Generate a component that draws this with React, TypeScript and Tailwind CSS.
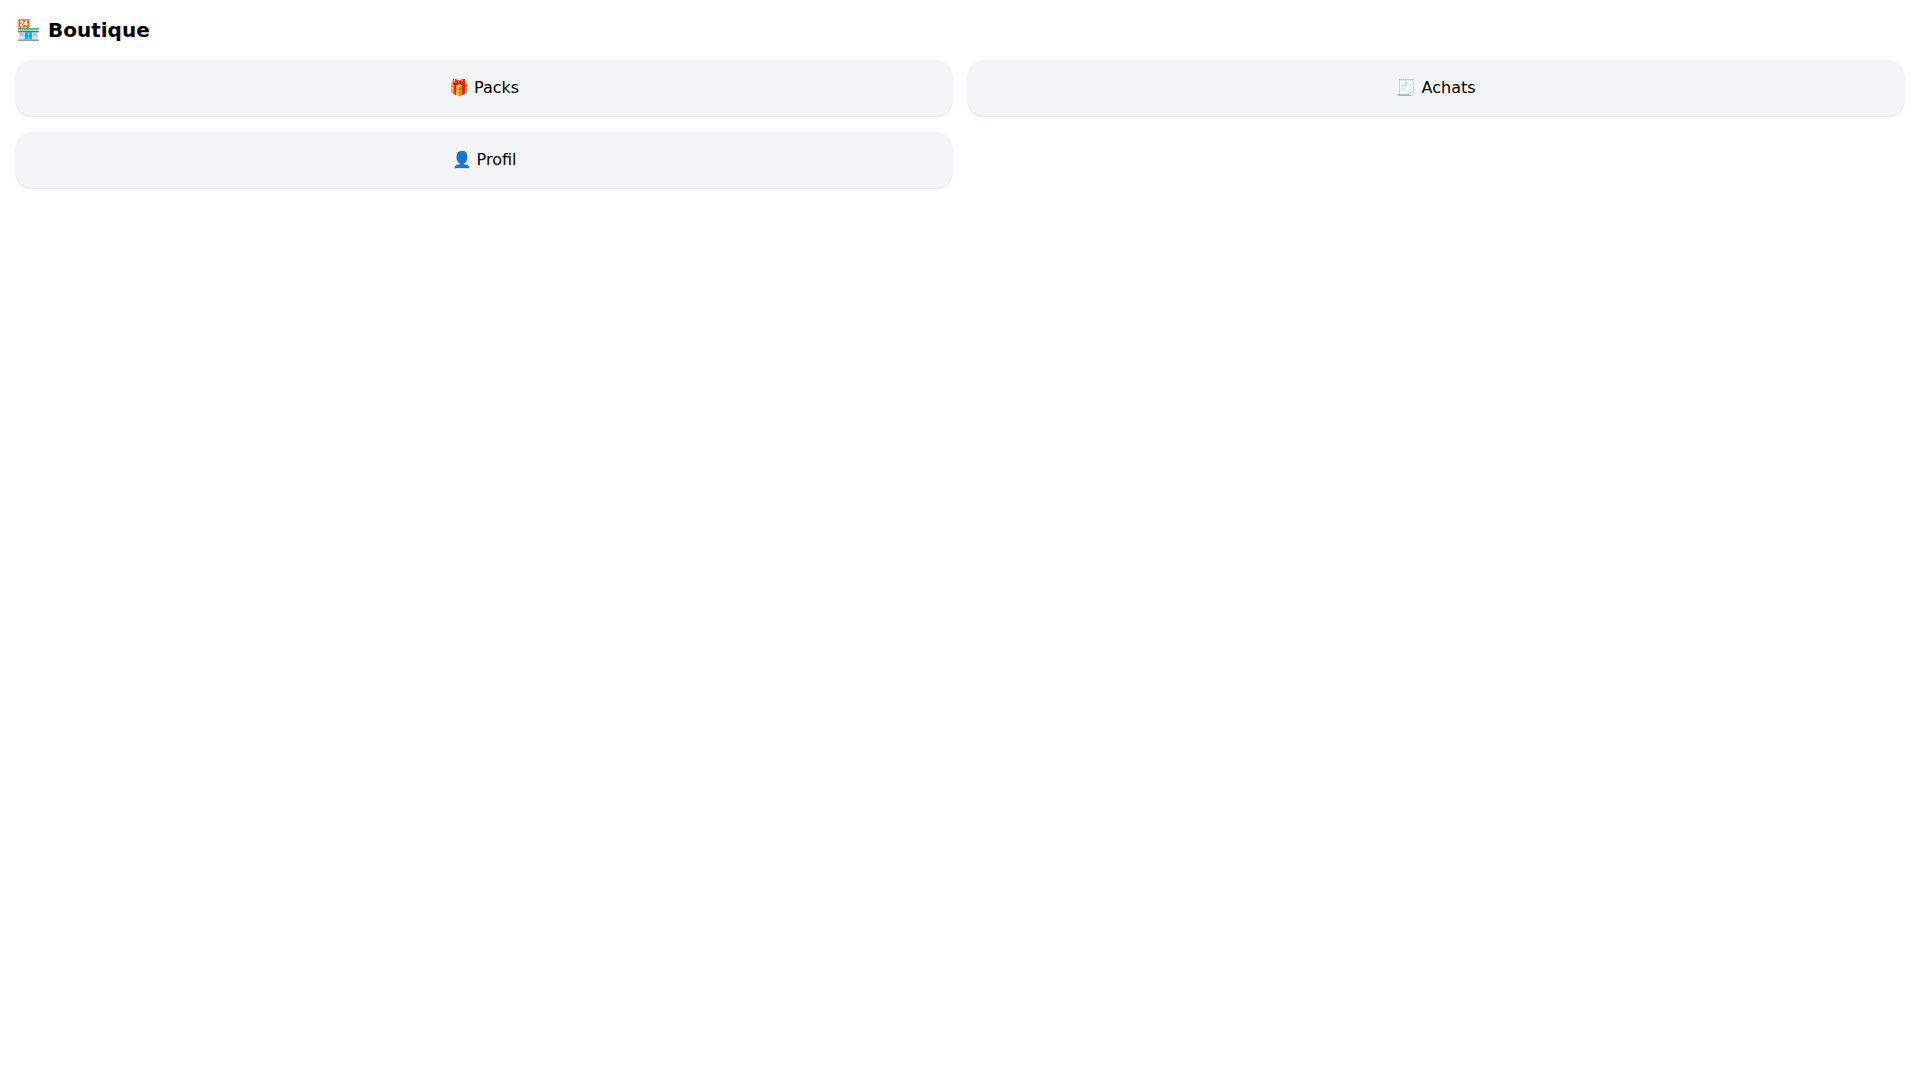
const stack = { fontFamily: '"DejaVu Sans", sans-serif' };

function Tile({ label }: { label: string }) {
  return (
    <button className="rounded-2xl bg-gray-100 p-4 text-base text-black shadow-sm">
      {label}
    </button>
  );
}

export default function App() {
  return (
    <div className="min-h-screen bg-white p-4 text-black" style={stack}>
      <h1 className="mb-4 text-xl font-bold">🏪 Boutique</h1>
      <div className="grid grid-cols-2 gap-4">
        <Tile label="🎁 Packs" />
        <Tile label="🧾 Achats" />
        <Tile label="👤 Profil" />
      </div>
    </div>
  );
}
